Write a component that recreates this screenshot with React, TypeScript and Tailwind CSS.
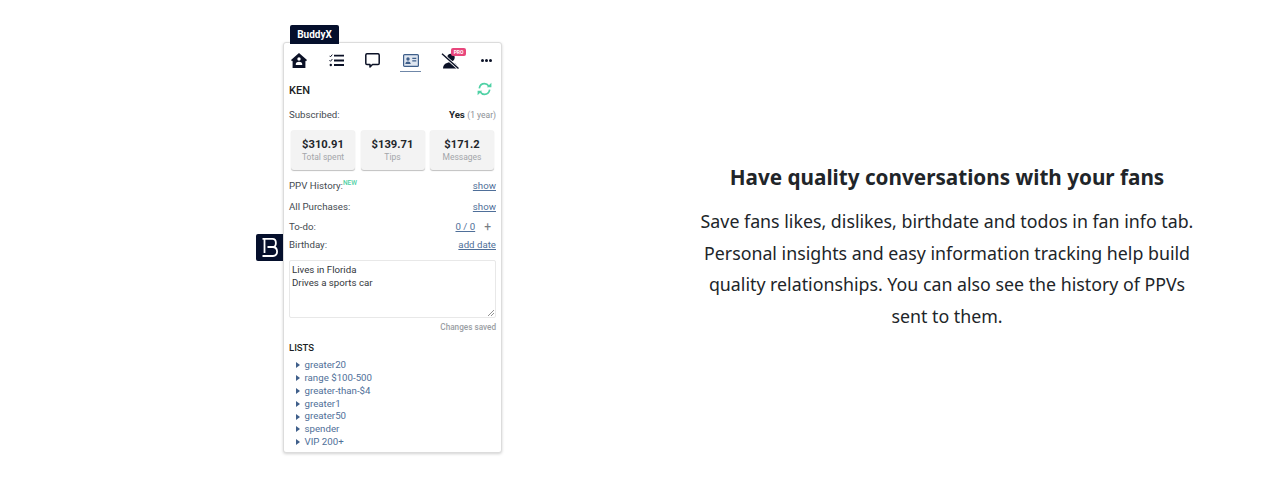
const stats = [
  { value: '$310.91', label: 'Total spent' },
  { value: '$139.71', label: 'Tips' },
  { value: '$171.2', label: 'Messages' },
];

const lists = ['greater20', 'range $100-500', 'greater-than-$4', 'greater1', 'greater50', 'spender', 'VIP 200+'];

function HomeIcon() {
  return (
    <svg width="16" height="15" viewBox="0 0 16 15" className="text-[#0b1126]">
      <path fill="currentColor" fillRule="evenodd" d="M8 0 16 7l-1 1.2-.6-.5V15H1.6V7.7L1 8.200 0 7ZM8 4.300a1.700 1.700 0 1 0 0 3.400 1.700 1.700 0 0 0 0-3.400ZM4.800 12h6.400v-1.200C11.200 9.500 9.400 8.800 8 8.800s-3.200.7-3.200 2Z" />
    </svg>
  );
}

function TodoIcon() {
  return (
    <svg width="15" height="13" viewBox="0 0 15 13" fill="none" stroke="#0b1126">
      <path d="M0.500 1.800 1.500 2.800 3.300 0.600M0.500 6.300 1.500 7.300 3.300 5.100" strokeWidth="1" />
      <circle cx="1.800" cy="11" r="1.200" fill="#0b1126" stroke="none" />
      <path d="M5 1.700h10M5 6.500h10M5 11h10" strokeWidth="1.800" />
    </svg>
  );
}

function ChatIcon() {
  return (
    <svg width="15" height="15" viewBox="0 0 15 15" fill="none" stroke="#0b1126" strokeWidth="1.500">
      <path d="M2 .8h11A1.300 1.300 0 0 1 14.200 2v8.200A1.300 1.300 0 0 1 13 11.500H7.500L5 14v-2.500H2A1.300 1.300 0 0 1 .8 10.200V2A1.300 1.300 0 0 1 2 .8Z" strokeLinejoin="round" />
    </svg>
  );
}

function ProfileCardIcon() {
  return (
    <svg width="16" height="13" viewBox="0 0 16 13" fill="none">
      <rect x=".6" y=".6" width="14.800" height="11.800" rx="1" stroke="#3f5f8a" strokeWidth="1.200" fill="#dfe6f0" />
      <circle cx="5" cy="5" r="1.700" fill="#3f5f8a" />
      <path d="M2.300 10c0-1.700 1.300-2.500 2.700-2.500S7.700 8.300 7.700 10Z" fill="#3f5f8a" />
      <path d="M9.300 4.300h4M9.300 6.800h4" stroke="#3f5f8a" strokeWidth="1.200" />
    </svg>
  );
}

function HiddenUserIcon() {
  return (
    <svg width="18" height="16" viewBox="0 0 18 16" fill="none">
      <circle cx="10" cy="4.500" r="3.700" fill="#0b1126" />
      <path d="M2 15.500c0-4 3.500-6.200 7.500-6.200s7 2.200 7 6.200Z" fill="#0b1126" />
      <path d="M1 .8 17.500 15.500" stroke="#ffffff" strokeWidth="3" />
      <path d="M1 .8 17.500 15.500" stroke="#0b1126" strokeWidth="1.400" />
    </svg>
  );
}

function SyncIcon() {
  return (
    <svg width="15" height="14" viewBox="0 0 15 14" fill="none" stroke="#4fd1a5" strokeWidth="1.700">
      <path d="M2.300 6.300C2.800 3.500 5 1.700 7.500 1.700c1.800 0 3.200.8 4.200 2.300" />
      <path d="M12.700 7.700c-.5 2.800-2.700 4.600-5.200 4.600-1.800 0-3.200-.8-4.200-2.300" />
      <path d="M9.800 5.200h4.600V.800ZM5.200 8.800H.6v4.400Z" fill="#4fd1a5" stroke="none" />
    </svg>
  );
}

function LogoMark() {
  return (
    <svg width="27" height="27" viewBox="0 0 27 27" fill="none" stroke="#ffffff" strokeWidth="1.800">
      <path d="M8.500 4.500V19" />
      <path d="M6.500 4.800H16.500C21 4.800 21 13 16.500 13H11.500" />
      <path d="M6.500 22H17C22.500 22 22.500 13 16.500 13" />
    </svg>
  );
}

function InfoRow({ label, children, className }: { label: React.ReactNode; children: React.ReactNode; className: string }) {
  return (
    <div className={`flex items-center justify-between ${className}`}>
      <span className="text-[#444a50]">{label}</span>
      {children}
    </div>
  );
}

export default function App() {
  return (
    <div className="flex h-[485px] w-[1273px] overflow-hidden bg-white">
      {/* Fan info panel */}
      <div className="ml-[283px] mt-[42px] w-[219px] shrink-0">
        <div className="relative h-[411px] rounded-[3px] border border-[#dcdcdc] bg-white px-[5px] font-['Roboto',sans-serif] text-[9.700px] shadow-[0_1px_3px_rgba(0,0,0,0.18)]">
          <div className="absolute -top-[18px] left-[6px] flex h-[19px] w-[49px] items-center justify-center rounded-t-[2px] bg-[#050f2c] text-[10px] font-bold text-white">
            BuddyX
          </div>
          <div className="absolute left-[-28px] top-[191px] h-[27px] w-[27px] rounded-l-[2px] bg-[#050f2c]">
            <LogoMark />
          </div>

          <div className="flex h-[30px] items-center pl-[2px] pt-[5px]">
            <HomeIcon />
            <span className="ml-[22px]">
              <TodoIcon />
            </span>
            <span className="ml-[21px]">
              <ChatIcon />
            </span>
            <div className="ml-[20px] flex h-[22px] w-[21px] items-start justify-center border-b border-[#6f87a8] pt-[4px]">
              <ProfileCardIcon />
            </div>
            <div className="relative ml-[20px]">
              <HiddenUserIcon />
              <span className="absolute -right-[7px] -top-[5px] rounded-[2px] bg-[#e8467c] px-[2.500px] text-[5px] font-bold leading-[8px] text-white">
                PRO
              </span>
            </div>
            <span className="ml-[22px] flex gap-[1px]">
              <i className="h-[3px] w-[3px] rounded-full bg-[#0b1126]" />
              <i className="h-[3px] w-[3px] rounded-full bg-[#0b1126]" />
              <i className="h-[3px] w-[3px] rounded-full bg-[#0b1126]" />
            </span>
          </div>

          <div className="mt-[10px] flex h-[16px] items-center justify-between pr-[4px]">
            <span className="text-[11px] font-medium text-[#1c1f24]">KEN</span>
            <span className="-mt-[4px]">
              <SyncIcon />
            </span>
          </div>

          <div className="mt-[9px] flex h-[14px] items-center justify-between">
            <span className="text-[#444a50]">Subscribed:</span>
            <span className="font-bold text-[#22262b]">
              Yes <span className="text-[8.500px] font-normal text-[#8b9096]">(1 year)</span>
            </span>
          </div>

          <div className="mt-[8px] flex justify-between px-[2px]">
            {stats.map((s) => (
              <div key={s.label} className="flex h-[40px] w-[64px] flex-col items-center justify-center rounded-[3px] bg-[#f3f3f3] shadow-[0_1px_1px_rgba(0,0,0,0.25)]">
                <span className="text-[11.200px] font-bold leading-[14px] text-[#22262b]">{s.value}</span>
                <span className="text-[8.500px] leading-[11px] text-[#a3a6aa]">{s.label}</span>
              </div>
            ))}
          </div>

          <InfoRow
            className="mt-[8px] h-[16px]"
            label={
              <>
                PPV History:<sup className="text-[6.500px] font-medium text-[#4fd1a5]">NEW</sup>
              </>
            }
          >
            <span className="text-[#4f6f99] underline">show</span>
          </InfoRow>
          <InfoRow className="mt-[5px] h-[16px]" label="All Purchases:">
            <span className="text-[#4f6f99] underline">show</span>
          </InfoRow>
          <InfoRow className="mt-[5px] h-[15px]" label="To-do:">
            <span className="flex items-center gap-[9px] pr-[5px]">
              <span className="text-[#4f6f99] underline">0 / 0</span>
              <span className="text-[12px] leading-none text-[#777c82]">+</span>
            </span>
          </InfoRow>
          <InfoRow className="mt-[3px] h-[15px]" label="Birthday:">
            <span className="text-[#4f6f99] underline">add date</span>
          </InfoRow>

          <div className="relative mt-[7px] h-[58px] rounded-[2px] border border-[#e8e8e8] px-[2px] py-[2px] leading-[13px] text-[#33373c]">
            <div>Lives in Florida</div>
            <div>Drives a sports car</div>
            <svg width="6" height="6" viewBox="0 0 6 6" className="absolute bottom-[1px] right-[1px]" stroke="#777" strokeWidth=".8">
              <path d="M0 6 6 0M3 6 6 3" />
            </svg>
          </div>

          <div className="mt-[4px] text-right text-[8.200px] font-medium leading-[11px] text-[#9a9ea3]">Changes saved</div>

          <div className="mt-[9px] text-[9.500px] font-medium leading-[12px] text-[#1c1f24]">LISTS</div>

          <ul className="mt-[5px] pl-[7px]">
            {lists.map((item) => (
              <li key={item} className="flex h-[12.800px] items-center gap-[4.500px] text-[#4f6f99]">
                <i className="h-0 w-0 border-y-[3.500px] border-l-[4px] border-y-transparent border-l-[#3f5f8a]" />
                {item}
              </li>
            ))}
          </ul>
        </div>
      </div>

      {/* Copy */}
      <div className="ml-[195px] mt-[161px] w-[500px] shrink-0 text-center font-['Noto_Sans',sans-serif] text-[#212529]">
        <h2 className="text-[20.700px] font-bold leading-[32px]">Have quality conversations with your fans</h2>
        <p className="mt-[13.300px] text-[17.800px] leading-[31.500px]">
          Save fans likes, dislikes, birthdate and todos in fan info tab. Personal insights and easy information tracking help build quality relationships. You can also see the history of PPVs sent to them.
        </p>
      </div>
    </div>
  );
}
